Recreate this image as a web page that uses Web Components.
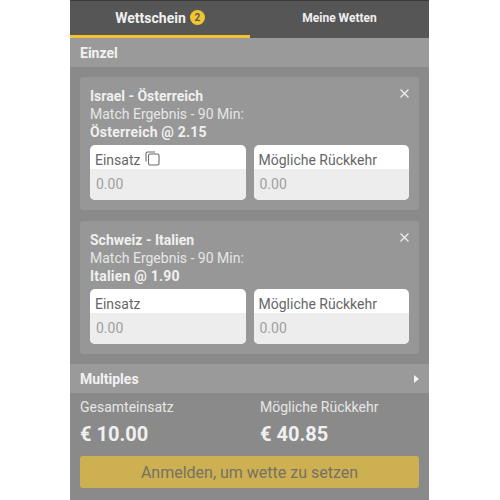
<!DOCTYPE html>
<html lang="de">
<head>
<meta charset="utf-8">
<style>
  html, body { margin: 0; padding: 0; background: #fff; }
  body { font-family: Roboto, "Liberation Sans", sans-serif; height: 500px; overflow: hidden; }
</style>
</head>
<body>
<bet-slip>
  <bet-tabs></bet-tabs>
  <section-bar>Einzel</section-bar>
  <div style="display:flex;flex-direction:column;gap:11px;padding:10px 10px 10px">
    <bet-card match="Israel - Österreich" pick="Österreich @ 2.15" copy></bet-card>
    <bet-card match="Schweiz - Italien" pick="Italien @ 1.90"></bet-card>
  </div>
  <section-bar arrow>Multiples</section-bar>
  <bet-totals></bet-totals>
</bet-slip>

<script>
class BetSlip extends HTMLElement {
  connectedCallback() {
    this.attachShadow({ mode: 'open' });
    this.shadowRoot.innerHTML = `
      <style>
        :host {
          display: block;
          width: 359px;
          height: 500px;
          margin-left: 70px;
          background: #8a8a8a;
          overflow: hidden;
        }
      </style>
      <slot></slot>
    `;
  }
}

class BetTabs extends HTMLElement {
  connectedCallback() {
    this.attachShadow({ mode: 'open' });
    this.shadowRoot.innerHTML = `
      <style>
        :host {
          display: grid;
          grid-template-columns: 180px 179px;
          height: 38px;
          background: #565656;
          border-top: 1px solid #3a3a3a;
          box-sizing: border-box;
          color: #f0f0f0;
          font-weight: 700;
        }
        .tab {
          display: flex;
          align-items: center;
          justify-content: center;
          gap: 4px;
          height: 38px;
          box-sizing: border-box;
          padding-bottom: 2px;
        }
        .active {
          border-bottom: 3px solid #f2c230;
          font-size: 14px;
          padding-bottom: 0;
          margin-top: -1px;
        }
        .other { font-size: 12px; margin-top: -1px; }
        .badge {
          width: 15px;
          height: 15px;
          border-radius: 50%;
          background: #f4c430;
          color: #5a5a5a;
          font-size: 10px;
          line-height: 15px;
          text-align: center;
        }
      </style>
      <div class="tab active"><span>Wettschein</span><span class="badge">2</span></div>
      <div class="tab other">Meine Wetten</div>
    `;
  }
}

class SectionBar extends HTMLElement {
  connectedCallback() {
    this.attachShadow({ mode: 'open' });
    const arrow = this.hasAttribute('arrow')
      ? '<svg style="margin-top:1px" width="6" height="10" viewBox="0 0 6 10"><path d="M1 1L6 5L1 9Z" fill="#f4f4f4"/></svg>'
      : '';
    this.shadowRoot.innerHTML = `
      <style>
        :host {
          display: flex;
          align-items: center;
          justify-content: space-between;
          height: 29px;
          padding: 0 10px;
          background: #9a9a9a;
          color: #f2f2f2;
          font-size: 14px;
          font-weight: 700;
        }
      </style>
      <span><slot></slot></span>${arrow}
    `;
  }
}

class BetCard extends HTMLElement {
  connectedCallback() {
    this.attachShadow({ mode: 'open' });
    const copy = this.hasAttribute('copy')
      ? `<svg class="copy" width="15" height="15" viewBox="0 0 15 15" fill="none" stroke="#6b6b6b" stroke-width="1.1">
           <rect x="3.5" y="3" width="10.5" height="11" rx="1.5"/>
           <path d="M1 10.5V2.5A1.5 1.5 0 0 1 2.5 1H10"/>
         </svg>`
      : '';
    this.shadowRoot.innerHTML = `
      <style>
        :host {
          display: block;
          position: relative;
          height: 133px;
          box-sizing: border-box;
          padding: 10px 10px 0;
          background: #979797;
          border-radius: 3px;
          color: #f0f0f0;
          font-size: 14px;
          line-height: 18px;
        }
        .close { position: absolute; top: 12px; right: 10px; }
        .strong { font-weight: 700; }
        .pick { letter-spacing: 0.2px; }
        .light { color: #e6e6e6; }
        .boxes {
          display: grid;
          grid-template-columns: 1fr 1fr;
          gap: 8px;
          margin-top: 4px;
        }
        .box {
          border-radius: 5px;
          overflow: hidden;
          background: #fff;
          color: #666;
        }
        .label {
          display: flex;
          align-items: center;
          gap: 5px;
          height: 24px;
          box-sizing: border-box;
          padding: 5px 5px 0;
        }
        .copy { margin-top: -3px; }
        .value {
          height: 31px;
          line-height: 30px;
          padding: 0 6px;
          background: #ededed;
          color: #a0a0a0;
        }
      </style>
      <svg class="close" width="9" height="9" viewBox="0 0 9 9" stroke="#f0f0f0" stroke-width="1.2"><path d="M0.5 0.5L8.5 8.5M8.5 0.5L0.5 8.5"/></svg>
      <div class="strong">${this.getAttribute('match')}</div>
      <div class="light">Match Ergebnis - 90 Min:</div>
      <div class="strong pick">${this.getAttribute('pick')}</div>
      <div class="boxes">
        <div class="box">
          <div class="label">Einsatz ${copy}</div>
          <div class="value">0.00</div>
        </div>
        <div class="box">
          <div class="label">Mögliche Rückkehr</div>
          <div class="value">0.00</div>
        </div>
      </div>
    `;
  }
}

class BetTotals extends HTMLElement {
  connectedCallback() {
    this.attachShadow({ mode: 'open' });
    this.shadowRoot.innerHTML = `
      <style>
        :host {
          display: block;
          padding: 5px 10px 0;
          color: #f0f0f0;
        }
        .cols {
          display: grid;
          grid-template-columns: 180px 1fr;
        }
        .label { font-size: 14px; line-height: 18px; color: #e6e6e6; }
        .amount { font-size: 20px; font-weight: 700; line-height: 24px; margin-top: 6px; }
        button {
          display: block;
          width: 100%;
          height: 32px;
          margin-top: 10px;
          padding: 0;
          border: 0;
          border-radius: 3px;
          background: #ccb052;
          color: #777163;
          font: 400 16px Roboto, "Liberation Sans", sans-serif;
        }
      </style>
      <div class="cols">
        <div><div class="label">Gesamteinsatz</div><div class="amount">€ 10.00</div></div>
        <div><div class="label">Mögliche Rückkehr</div><div class="amount">€ 40.85</div></div>
      </div>
      <button>Anmelden, um wette zu setzen</button>
    `;
  }
}

customElements.define('bet-slip', BetSlip);
customElements.define('bet-tabs', BetTabs);
customElements.define('section-bar', SectionBar);
customElements.define('bet-card', BetCard);
customElements.define('bet-totals', BetTotals);
</script>
</body>
</html>
